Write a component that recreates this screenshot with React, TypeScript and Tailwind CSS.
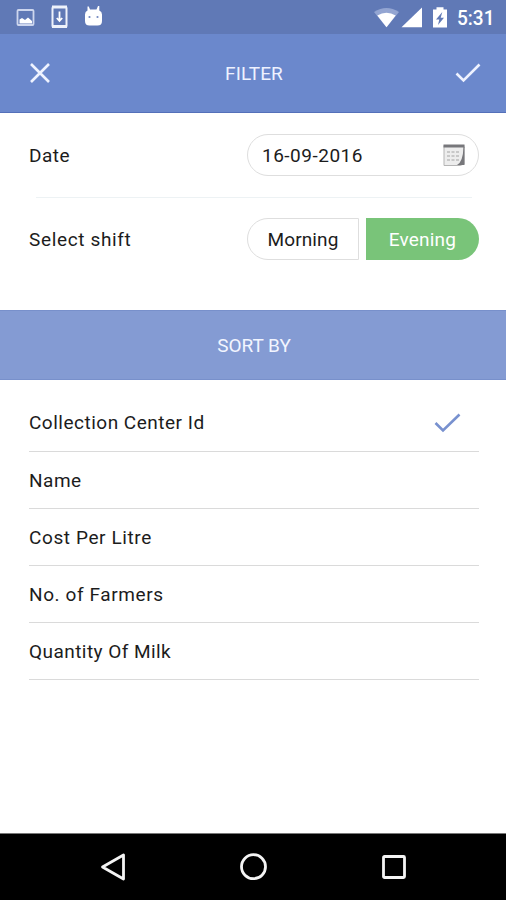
import React from "react";

const rows = [
  { label: "Collection Center Id", box: "h-[72px]", pad: "pt-[15px]", track: "tracking-[0.5px]", selected: true },
  { label: "Name", box: "h-[57px]", pad: "pt-px", track: "tracking-[0.5px]" },
  { label: "Cost Per Litre", box: "h-[57px]", pad: "pt-px", track: "tracking-[0.6px]" },
  { label: "No. of Farmers", box: "h-[57px]", pad: "pt-px", track: "tracking-[0.6px]" },
  { label: "Quantity Of Milk", box: "h-[57px]", pad: "pt-px", track: "tracking-[0.45px]" },
];

function StatusBar() {
  return (
    <div className="flex h-[34px] items-start bg-[#6079b6]">
      <svg width="506" height="34" viewBox="0 0 506 34" fill="none" className="shrink-0">
        <rect x="17.5" y="10" width="16" height="15" rx="1" stroke="#cdd6ee" strokeWidth="1.800" />
        <path d="M19.500 23.500V19.500l2.500-1.500 3 2 3-2.500 4 3.500V23.500z" fill="#fff" />
        <rect x="52.500" y="7" width="14" height="20" rx="1" stroke="#eef2fb" strokeWidth="2" />
        <path d="M52 26.500h15M52 7h15" stroke="#eef2fb" strokeWidth="3" />
        <path d="M59.500 11.500v9M56.800 18l2.700 3 2.700-3" stroke="#fff" strokeWidth="1.800" />
        <path d="M87.500 10.500V6.500h1.300L90 9.500h6.500L98 6h1.300v4.500q2.700 1 2.700 4v6.500q0 4.500-4.500 4.500h-8q-4.500 0-4.500-4.500v-6.500q0-3 2.500-4z" fill="#fff" />
        <circle cx="89.500" cy="17" r="1.100" fill="#7187c0" />
        <circle cx="97.500" cy="17" r="1.100" fill="#7187c0" />
        <path d="M374 12q12.500-8 25 0L386.500 27.300z" fill="#93a5d2" />
        <path d="M377.300 15.500q9.200-5.500 18.400 0L386.500 27.300z" fill="#fff" />
        <path d="M422 7.500V27.300H401.500z" fill="#fff" />
        <path d="M433 9.500h3.500V7.200h7v2.300h3.500V27.500h-14z" fill="#fff" />
        <path d="M442.300 12L436 19.500h3.300L438 25l6-7.200h-3.300z" fill="#6079b6" />
        <text x="457" y="25" fontSize="19.500" fontWeight="500" fontFamily="Roboto, sans-serif" fill="#fff" textLength="37.500" lengthAdjust="spacingAndGlyphs">5:31</text>
      </svg>
    </div>
  );
}

function CalendarIcon() {
  return (
    <svg width="22" height="22" viewBox="0 0 22 22" fill="none">
      <path d="M1 1.500H21V20L17 21.500H1z" fill="#ededed" stroke="#b5b5b5" strokeWidth="1" />
      <path d="M.500 .500h21v3H.500z" fill="#77777b" />
      <path d="M21.500 3v18H14q6-3 6.500-18z" fill="#77777b" />
      <path d="M4 8h3M8.500 8h3M13 8h3M4 12h3M8.500 12h3M13 12h3M4 16h3M8.500 16h3M13 16h3" stroke="#c8c8c8" strokeWidth="2" />
    </svg>
  );
}

export default function App() {
  return (
    <div className="flex h-[900px] w-[506px] flex-col overflow-hidden bg-white font-['Roboto',sans-serif] text-[19px] leading-6 text-[#1c1c1c]">
      <StatusBar />
      <header className="flex h-[79px] items-center justify-between border-b border-[#5470b9] bg-[#6b88cc] pr-[25px] pl-[29px] text-[#eef2ff]">
        <svg width="22" height="22" viewBox="0 0 22 22" fill="none" stroke="currentColor" strokeWidth="2.600">
          <path d="M2 2l18 18M20 2L2 20" />
        </svg>
        <h1 className="pt-[2px] pl-[2px] tracking-[0.1px]">FILTER</h1>
        <svg width="26" height="20" viewBox="0 0 26 20" fill="none" stroke="currentColor" strokeWidth="2.600">
          <path d="M1.500 10.500l7 7L24.500 1.500" />
        </svg>
      </header>

      <section className="flex h-[197px] flex-col pt-[21px] pr-[27px] pl-[29px]">
        <div className="flex h-[42px] items-center justify-between">
          <span className="pt-[2px] tracking-[0.5px]">Date</span>
          <div className="flex h-[42px] w-[232px] items-center justify-between rounded-full border border-[#dedede] pr-[13px] pl-[14px]">
            <span className="pt-[2px] tracking-[0.5px]">16-09-2016</span>
            <CalendarIcon />
          </div>
        </div>
        <div className="mt-[21px] mr-[7px] ml-[7px] h-px bg-[#edf2f4]" />
        <div className="mt-[20px] flex h-[42px] items-center justify-between">
          <span className="pt-[2px] tracking-[0.65px]">Select shift</span>
          <div className="flex gap-[7px]">
            <button className="flex h-[42px] w-[112px] items-center justify-center rounded-l-full border border-[#dedede]">
              <span className="pt-[2px] tracking-[0.1px]">Morning</span>
            </button>
            <button className="flex h-[42px] w-[113px] items-center justify-center rounded-r-full bg-[#79c479] text-white">
              <span className="pt-[2px] tracking-[0.2px]">Evening</span>
            </button>
          </div>
        </div>
      </section>

      <div className="flex h-[70px] items-center justify-center border-y border-[#7890cb] bg-[#849bd3] text-[#f2f5ff]">
        <h2 className="pt-px pl-[2px] tracking-[0px]">SORT BY</h2>
      </div>

      <ul className="flex flex-1 flex-col pr-[27px] pl-[29px]">
        {rows.map((row) => (
          <li key={row.label} className={`flex items-center justify-between border-b border-[#dadada] ${row.box} ${row.pad}`}>
            <span className={row.track}>{row.label}</span>
            {row.selected && (
              <svg width="27" height="20" viewBox="0 0 27 20" fill="none" stroke="#7891cf" strokeWidth="2.600" className="mr-[18px]">
                <path d="M1.500 10l7.500 7.500L25.500 1.500" />
              </svg>
            )}
          </li>
        ))}
      </ul>

      <nav className="flex h-[67px] items-center justify-between border-t border-[#777] bg-black pr-[99px] pl-[100px]">
        <svg width="26" height="28" viewBox="0 0 26 28" fill="none" stroke="#f4f4f4" strokeWidth="2.800" strokeLinejoin="round">
          <path d="M2.500 14L23.500 2v24z" />
        </svg>
        <svg width="28" height="28" viewBox="0 0 28 28" fill="none" stroke="#f4f4f4" strokeWidth="2.800">
          <circle cx="13.500" cy="13.700" r="12" />
        </svg>
        <svg width="26" height="26" viewBox="0 0 26 26" fill="none" stroke="#f4f4f4" strokeWidth="2.800">
          <rect x="2.500" y="2.500" width="21" height="21" rx="1" />
        </svg>
      </nav>
    </div>
  );
}
